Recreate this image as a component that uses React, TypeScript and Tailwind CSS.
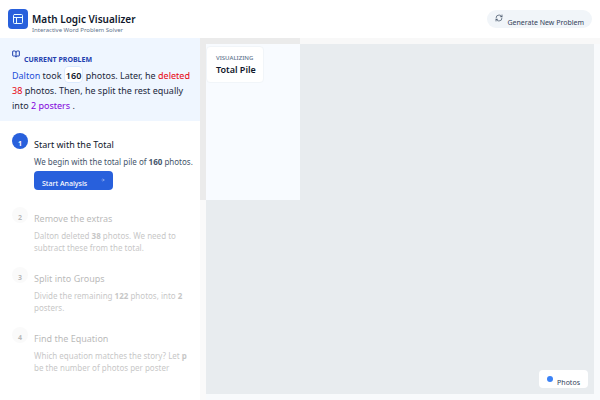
import type { ReactNode } from 'react';
import { ArrowRight, BookOpen, PanelsTopLeft, RefreshCw } from 'lucide-react';

type Step = { title: string; body: ReactNode; action?: string };

const strong = (text: string) => <strong className="font-bold">{text}</strong>;

const steps: Step[] = [
  {
    title: 'Start with the Total',
    body: <>We begin with the total pile of {strong('160')} photos.</>,
    action: 'Start Analysis',
  },
  {
    title: 'Remove the extras',
    body: <>Dalton deleted {strong('38')} photos. We need to subtract these from the total.</>,
  },
  {
    title: 'Split into Groups',
    body: <>Divide the remaining {strong('122')} photos, into {strong('2')} posters.</>,
  },
  {
    title: 'Find the Equation',
    body: <>Which equation matches the story? Let {strong('p')} be the number of photos per poster</>,
  },
];

function Header() {
  return (
    <header className="flex h-[38px] items-center justify-between bg-white px-2">
      <div className="flex items-center gap-1">
        <span className="flex size-5 items-center justify-center rounded bg-[#2860dc] text-cyan-50">
          <PanelsTopLeft className="size-3" strokeWidth={2} />
        </span>
        <div className="flex flex-col pt-2">
          <h1 className="text-[10px] leading-[13px] font-semibold text-slate-900">Math Logic Visualizer</h1>
          <p className="text-[6px] leading-[8px] text-slate-500">Interactive Word Problem Solver</p>
        </div>
      </div>
      <button className="flex h-[18px] items-start gap-1 rounded-full bg-slate-100 px-2 pt-1 text-[7px] text-slate-700">
        <RefreshCw className="size-2" />
        <span className="pt-1 leading-[10px]">Generate New Problem</span>
      </button>
    </header>
  );
}

function Problem() {
  return (
    <section className="h-[83px] bg-[#eff6ff] pt-3 pr-1 pl-3">
      <h2 className="flex items-start gap-1 text-[7px] font-bold text-[#1e40af]">
        <BookOpen className="size-2" strokeWidth={3} />
        <span className="pt-1 leading-[12px]">CURRENT PROBLEM</span>
      </h2>
      <p className="mt-0.5 text-[9px] leading-[15px] text-slate-800">
        <span className="text-[#1d4ed8]">Dalton</span> took{' '}
        <span className="rounded-sm border border-blue-100 bg-white px-px pt-0.5 font-semibold text-slate-900">160</span>{' '}
        photos. Later, he <span className="text-red-600">deleted</span> <span className="text-red-600">38</span> photos.
        Then, he split the rest equally into <span className="text-purple-700">2 posters</span> .
      </p>
    </section>
  );
}

function StepItem({ step, index }: { step: Step; index: number }) {
  const active = index === 0;
  return (
    <li className={`flex items-start gap-1.5 ${active ? '' : 'opacity-40'}`}>
      <span
        className={`flex size-4 shrink-0 items-end justify-center rounded-full text-[7px] leading-[10px] font-bold ${
          active ? 'bg-[#2860dc] text-white' : 'bg-neutral-100 text-neutral-600'
        }`}
      >
        {index + 1}
      </span>
      <div className="min-w-0 flex-1 pt-1">
        <h3 className={`text-[9px] leading-[16px] ${active ? 'text-slate-900' : 'text-neutral-600'}`}>{step.title}</h3>
        <p className={`mt-[3px] text-[8px] leading-[12px] ${active ? 'text-slate-600' : 'text-neutral-500'}`}>
          {step.body}
        </p>
        {step.action && (
          <button className="mt-[3px] mb-1 flex h-[19px] items-start gap-3.5 rounded bg-[#2860dc] px-2 pt-[7px] text-[7px] leading-[12px] font-medium text-white">
            {step.action}
            <ArrowRight className="size-1" />
          </button>
        )}
      </div>
    </li>
  );
}

export default function App() {
  return (
    <div className="flex min-h-screen flex-col bg-white font-['Noto_Sans',sans-serif]">
      <Header />
      <div className="flex flex-1">
        <aside className="w-1/3">
          <Problem />
          <ol className="flex flex-col gap-[13px] pt-3 pr-1 pl-3">
            {steps.map((step, index) => (
              <StepItem key={step.title} step={step} index={index} />
            ))}
          </ol>
        </aside>
        <main className="flex flex-1 flex-col bg-[#f8fafc]">
          <div className="flex h-1.5">
            <div className="w-1/4 bg-[#ebebeb]" />
            <div className="flex-1 bg-[#f8f8f8]" />
          </div>
          <div className="flex flex-1">
            <div className="flex w-1.5 flex-col">
              <div className="h-[156px] bg-[#ebebeb]" />
              <div className="flex-1 bg-[#fafafa]" />
            </div>
            <div className="mr-1.5 mb-1.5 flex flex-1 flex-col justify-between bg-[#e8ecef]">
              <div className="h-[156px] w-[94px] bg-[#f8fbff]">
                <div className="mt-0.5 w-[58px] rounded border border-slate-100 bg-white px-[9px] py-1.5">
                  <p className="text-[6px] leading-[10px] font-medium text-slate-500">VISUALIZING</p>
                  <p className="text-[9px] leading-[13px] font-semibold whitespace-nowrap text-slate-900">Total Pile</p>
                </div>
              </div>
              <div className="mr-1.5 mb-1.5 flex h-[18px] items-start gap-1 self-end rounded bg-white px-2 pt-1.5">
                <span className="size-1.5 rounded-full bg-[#3b82f6]" />
                <span className="pt-0.5 text-[7px] leading-[10px] text-slate-700">Photos</span>
              </div>
            </div>
          </div>
        </main>
      </div>
    </div>
  );
}
